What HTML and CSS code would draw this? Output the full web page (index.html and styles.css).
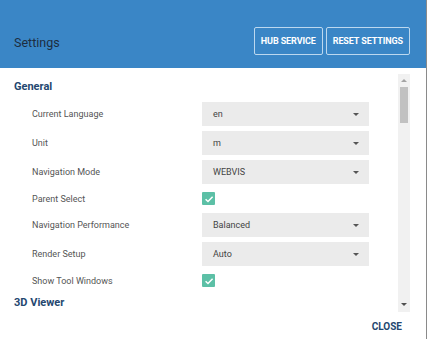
FILE: index.html
```html
<!DOCTYPE html>
<html>
<head>
<meta charset="utf-8">
<link rel="stylesheet" href="styles.css">
</head>
<body>
<div class="dialog">
  <header class="head">
    <div class="title">Settings</div>
    <div class="actions">
      <button class="hbtn">HUB SERVICE</button>
      <button class="hbtn">RESET SETTINGS</button>
    </div>
  </header>
  <main class="body">
    <div class="content">
      <h2 class="section">General</h2>
      <div class="row">
        <span class="label">Current Language</span>
        <div class="select"><span>en</span><i class="caret"></i></div>
      </div>
      <div class="row">
        <span class="label">Unit</span>
        <div class="select"><span>m</span><i class="caret"></i></div>
      </div>
      <div class="row">
        <span class="label">Navigation Mode</span>
        <div class="select"><span>WEBVIS</span><i class="caret"></i></div>
      </div>
      <div class="row check-row">
        <span class="label">Parent Select</span>
        <span class="check"><svg viewBox="0 0 12 12" width="12" height="12"><path d="M2.6 6.2 L5 8.5 L9.6 3.8" fill="none" stroke="#fff" stroke-width="1.5"/></svg></span>
      </div>
      <div class="row">
        <span class="label">Navigation Performance</span>
        <div class="select"><span>Balanced</span><i class="caret"></i></div>
      </div>
      <div class="row">
        <span class="label">Render Setup</span>
        <div class="select"><span>Auto</span><i class="caret"></i></div>
      </div>
      <div class="row check-row">
        <span class="label">Show Tool Windows</span>
        <span class="check"><svg viewBox="0 0 12 12" width="12" height="12"><path d="M2.6 6.2 L5 8.5 L9.6 3.8" fill="none" stroke="#fff" stroke-width="1.5"/></svg></span>
      </div>
      <h2 class="section section2">3D Viewer</h2>
    </div>
    <div class="scrollbar">
      <i class="arrow up"></i>
      <div class="track"><div class="thumb"></div></div>
      <i class="arrow down"></i>
    </div>
  </main>
  <footer class="foot">
    <button class="close">CLOSE</button>
  </footer>
</div>
</body>
</html>
```
FILE: styles.css
```css
html, body {
  margin: 0;
  padding: 0;
  background: #ffffff;
}
body {
  font-family: Roboto, "Liberation Sans", sans-serif;
}
.dialog {
  width: 427px;
  height: 339px;
  display: flex;
  flex-direction: column;
  box-sizing: border-box;
  border-right: 1px solid #8a8a8a;
  overflow: hidden;
}
.head {
  height: 68px;
  flex: none;
  background: #3a86c6;
  display: flex;
  align-items: center;
  justify-content: space-between;
  box-sizing: border-box;
  padding: 14px 17px 0 14px;
  margin-right: -1px;
}
.title {
  font-size: 12.5px;
  color: #1d2d3f;
  margin-top: 3px;
}
.actions {
  display: flex;
  gap: 3px;
}
.hbtn {
  height: 28px;
  box-sizing: border-box;
  border: 1px solid #bcd8ef;
  border-radius: 2px;
  background: transparent;
  color: #ffffff;
  font-family: Roboto, "Liberation Sans", sans-serif;
  font-weight: 700;
  font-size: 9px;
  letter-spacing: -0.1px;
  padding: 0 6px;
}
.body {
  flex: 1;
  display: flex;
  min-height: 0;
  padding: 6px 16px 0 14px;
}
.content {
  flex: 1;
  overflow: hidden;
  padding-top: 5px;
  height: 238px;
}
.section {
  margin: 0 0 7px 0;
  font-size: 11px;
  line-height: 16px;
  font-weight: 700;
  color: #24476f;
}
.section2 {
  margin-top: 5px;
}
.row {
  display: flex;
  align-items: center;
  height: 24px;
  margin-bottom: 5px;
  padding-left: 18px;
}
.check-row {
  height: 19px;
}
.label {
  width: 170px;
  flex: none;
  font-size: 9px;
  color: #555555;
}
.select {
  width: 167px;
  height: 24px;
  background: #ebebeb;
  display: flex;
  align-items: center;
  justify-content: space-between;
  box-sizing: border-box;
  padding: 0 10px 0 11px;
  font-size: 9px;
  color: #444444;
}
.caret {
  width: 0;
  height: 0;
  border-left: 3.5px solid transparent;
  border-right: 3.5px solid transparent;
  border-top: 3.5px solid #555555;
}
.check {
  width: 13px;
  height: 13px;
  border-radius: 1px;
  background: #5cc0a6;
  display: flex;
  align-items: center;
  justify-content: center;
}
.scrollbar {
  width: 12px;
  height: 238px;
  flex: none;
  background: #f1f1f1;
  display: flex;
  flex-direction: column;
  align-items: center;
}
.arrow {
  width: 0;
  height: 0;
  border-left: 3px solid transparent;
  border-right: 3px solid transparent;
}
.arrow.up {
  border-bottom: 3px solid #a3a3a3;
  margin: 5px 0 5px;
}
.arrow.down {
  border-top: 3px solid #505050;
  margin: 4px 0 6px;
}
.track {
  flex: 1;
  width: 8px;
}
.thumb {
  height: 36px;
  background: #c1c1c1;
}
.foot {
  flex: none;
  display: flex;
  justify-content: flex-end;
  padding: 0 24px 0 0;
  height: 26px;
  align-items: center;
}
.close {
  background: transparent;
  border: 0;
  padding: 0;
  font-family: Roboto, "Liberation Sans", sans-serif;
  font-weight: 700;
  font-size: 10px;
  color: #24476f;
}
```
